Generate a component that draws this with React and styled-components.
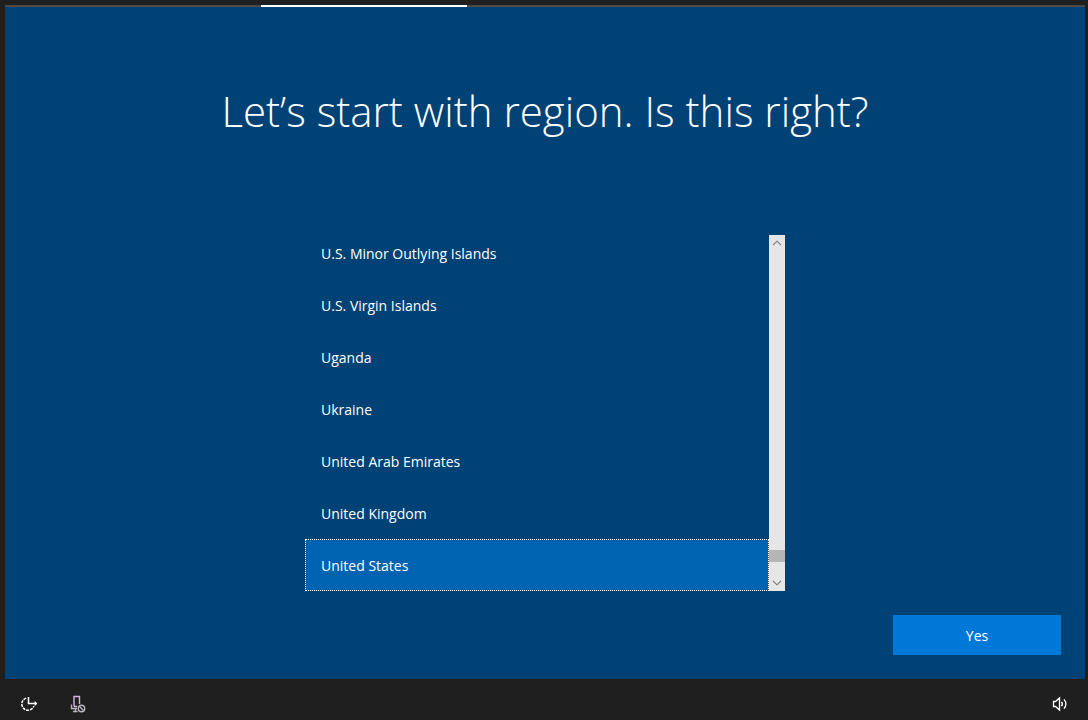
import React, { useState } from 'react';
import styled, { createGlobalStyle } from 'styled-components'

const regions = [
    'U.S. Minor Outlying Islands',
    'U.S. Virgin Islands',
    'Uganda',
    'Ukraine',
    'United Arab Emirates',
    'United Kingdom',
    'United States',
];

function App() {

    const [selected, setSelected] = useState('United States');

    return (
        <Screen>
            <GlobalStyle />
            <Panel>
                <Progress>
                    <ProgressValue />
                </Progress>
                <Title>Let’s start with region. Is this right?</Title>
                <Picker>
                    <List role="radiogroup" aria-label="Region">
                        {
                            regions.map(region => (
                                <Region key={region} $selected={region === selected}>
                                    <input
                                        type="radio"
                                        name="region"
                                        value={region}
                                        checked={region === selected}
                                        onChange={() => setSelected(region)}
                                    />
                                    {region}
                                </Region>
                            ))
                        }
                    </List>
                    <Scrollbar>
                        <ScrollButton type="button" aria-label="Scroll up">
                            <svg width="10" height="6" viewBox="0 0 10 6">
                                <path d="M1 5.2L5 1.2L9 5.2" />
                            </svg>
                        </ScrollButton>
                        <Track>
                            <Thumb />
                        </Track>
                        <ScrollButton type="button" aria-label="Scroll down">
                            <svg width="10" height="6" viewBox="0 0 10 6">
                                <path d="M1 0.8L5 4.8L9 0.8" />
                            </svg>
                        </ScrollButton>
                    </Scrollbar>
                </Picker>
                <Actions>
                    <YesButton type="button">Yes</YesButton>
                </Actions>
            </Panel>
            <Taskbar>
                <TaskGroup>
                    <IconButton type="button" aria-label="Ease of Access">
                        <EaseOfAccessIcon />
                    </IconButton>
                    <IconButton type="button" aria-label="Microphone off">
                        <MicrophoneIcon />
                    </IconButton>
                </TaskGroup>
                <IconButton type="button" aria-label="Volume">
                    <VolumeIcon />
                </IconButton>
            </Taskbar>
        </Screen>
    )
}

function EaseOfAccessIcon() {
    return (
        <svg width="18" height="18" viewBox="0 0 18 18" fill="none" stroke="#fff" strokeWidth="1.5">
            <path d="M6.2 3.1A6.2 6.2 0 1 0 13.9 11" strokeDasharray="3 0.9" />
            <path d="M8.5 2V8.5H16.5" />
            <path d="M14.6 6.6L16.5 8.5L14.6 10.4" strokeWidth="1.2" />
        </svg>
    )
}

function MicrophoneIcon() {
    return (
        <svg width="18" height="18" viewBox="0 0 18 18" fill="none" stroke="#b8b4bc" strokeWidth="1.4">
            <path d="M6 11.5V1.5H11.5V9M6 11.5H9" stroke="#d2b4e0" />
            <path d="M3.5 9.5V13.5H9M7.5 13.5V16.5M5 16.5H9.5" />
            <circle cx="13.5" cy="13.5" r="3.2" />
            <path d="M11.3 11.3L15.7 15.7" />
        </svg>
    )
}

function VolumeIcon() {
    return (
        <svg width="18" height="18" viewBox="0 0 18 18" fill="none" stroke="#fff" strokeWidth="1.3">
            <path d="M1.5 6.5H3.5L7.5 3V15L3.5 11.5H1.5Z" />
            <path d="M9.5 6.8Q11.3 9 9.5 11.2M12 4.3Q15.8 9 12 13.7" />
        </svg>
    )
}

export default App


const GlobalStyle = createGlobalStyle`
    * {
        box-sizing: border-box;
    }

    body {
        margin: 0;
        background: #1f1f1f;
        color: #fff;
        font-family: "Segoe UI", "Open Sans", "Noto Sans", sans-serif;
        font-size: 14px;
    }

    button {
        font: inherit;
        color: inherit;
        border: none;
        padding: 0;
        cursor: pointer;
    }
`;

const Screen = styled.div`
    display: flex;
    flex-direction: column;
    min-height: 100vh;
    padding: 5px 3px 0 5px;
`;

const Panel = styled.main`
    flex: 1;
    display: flex;
    flex-direction: column;
    background: #004275;
`;

const Progress = styled.div`
    display: grid;
    grid-template-columns: 256fr 206fr 618fr;
    height: 2px;
    background: #4c4a48;
`;

const ProgressValue = styled.div`
    grid-column: 2;
    background: #fff;
`;

const Title = styled.h1`
    margin: 72px 24px 0;
    font-size: 42px;
    line-height: 64px;
    font-weight: 300;
    text-align: center;
`;

const Picker = styled.div`
    display: flex;
    width: 100%;
    max-width: 480px;
    height: 356px;
    margin: 92px auto 0;
`;

const List = styled.div`
    flex: 1;
    display: flex;
    flex-direction: column;
    justify-content: flex-end;
    overflow: hidden;
`;

const Region = styled.label`
    flex: none;
    display: flex;
    align-items: center;
    height: 52px;
    padding: 0 15px;
    border: 1px dotted ${props => props.$selected ? '#fff' : 'transparent'};
    background: ${props => props.$selected
        ? 'linear-gradient(#0063b1, #0063b1) padding-box, #5c5048 border-box'
        : 'none'};
    cursor: pointer;

    input {
        appearance: none;
        width: 0;
        height: 0;
        margin: 0;
        outline: none;
    }
`;

const Scrollbar = styled.div`
    display: flex;
    flex-direction: column;
    width: 16px;
    background: #e6e6e6;
`;

const ScrollButton = styled.button`
    display: flex;
    align-items: center;
    justify-content: center;
    height: 16px;
    background: transparent;

    svg {
        fill: none;
        stroke: #777;
        stroke-width: 1.1;
    }
`;

const Track = styled.div`
    flex: 1;
    display: flex;
    flex-direction: column;
    justify-content: flex-end;
    padding-bottom: 13px;
`;

const Thumb = styled.div`
    height: 12px;
    background: #b5b5b5;
`;

const Actions = styled.div`
    display: flex;
    justify-content: flex-end;
    margin-top: auto;
    padding: 24px;
`;

const YesButton = styled.button`
    width: 168px;
    height: 40px;
    background: #0078d7;

    &:hover {
        background: #1a86db;
    }
`;

const Taskbar = styled.footer`
    display: flex;
    justify-content: space-between;
    height: 41px;
    padding: 8px 0 0;
`;

const TaskGroup = styled.div`
    display: flex;
`;

const IconButton = styled.button`
    display: flex;
    align-items: center;
    justify-content: center;
    width: 48px;
    height: 33px;
    background: transparent;
`;
